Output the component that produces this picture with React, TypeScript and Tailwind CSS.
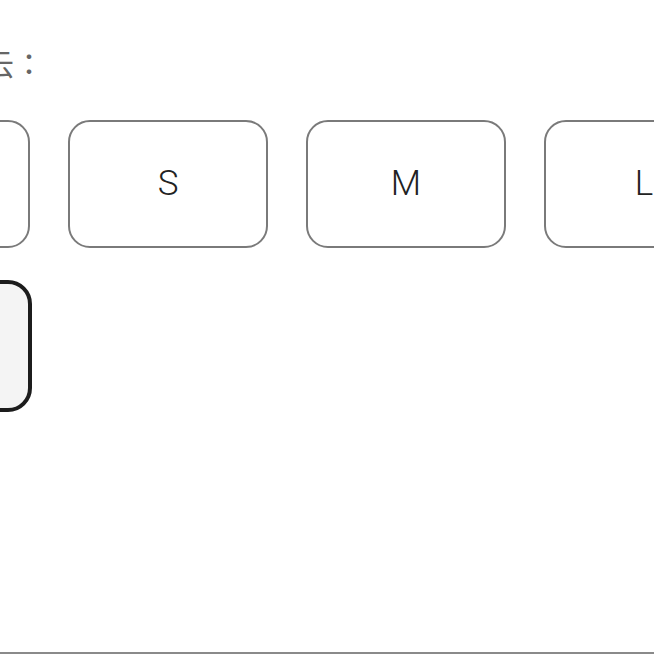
import { useState } from 'react';

const SIZES = ['XS', 'S', 'M', 'L', 'XL'];

export default function App() {
  const [selected, setSelected] = useState('XL');

  return (
    <div className="h-[654px] w-[654px] overflow-hidden border-b-2 border-[#8a8a8a] bg-white">
      {/* etiqueta, cortada a la izquierda como en la captura */}
      <div
        className="ml-[-16px] pt-[40px] text-[30px] leading-[44px] text-[#666]"
        style={{ fontFamily: '"Noto Sans CJK JP", "Noto Sans CJK SC", sans-serif' }}
      >
        云：
      </div>

      <div className="ml-[-170px] mt-[36px] flex w-[914px] flex-wrap gap-x-[38px] gap-y-[34px]">
        {SIZES.map((s) => {
          const active = s === selected;
          return (
            <button
              key={s}
              onClick={() => setSelected(s)}
              className={
                active
                  ? 'm-[-2px] box-border flex h-[132px] w-[204px] items-center justify-center rounded-[24px] border-4 border-[#1c1c1c] bg-[#f4f4f4] text-[35px] font-light text-[#222]'
                  : 'box-border flex h-[128px] w-[200px] items-center justify-center rounded-[22px] border-2 border-[#7a7a7a] bg-white text-[35px] font-light text-[#222]'
              }
              style={{ fontFamily: 'Roboto, "Liberation Sans", sans-serif' }}
            >
              {s}
            </button>
          );
        })}
      </div>
    </div>
  );
}
